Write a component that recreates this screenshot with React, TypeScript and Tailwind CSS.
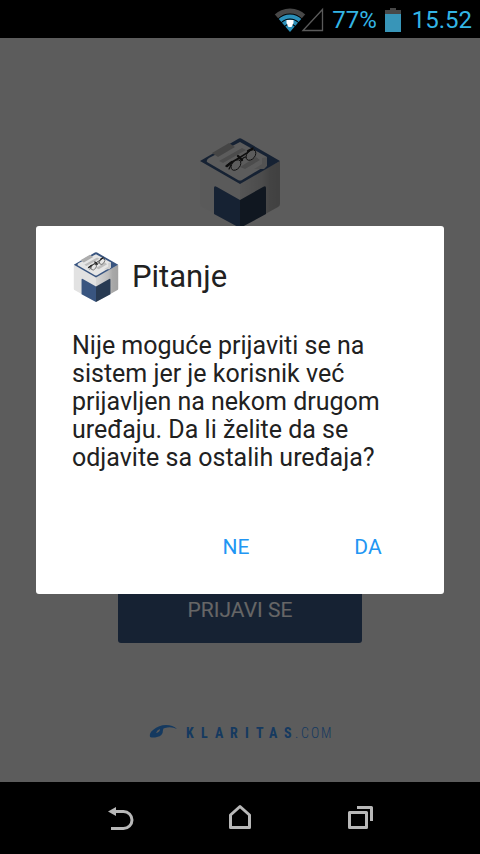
import React from 'react';

interface IconProps {
  className?: string;
}

/**
 * Cube logo with a sheet of paper and glasses on its top face
 */
const CubeLogo: React.FC<IconProps> = ({ className = '' }) => (
  <svg viewBox="0 0 80 90" className={className} aria-hidden="true">
    <defs>
      <linearGradient id="cubeRight" x1="0" x2="1" y1="0" y2="0">
        <stop offset="0" stopColor="#d6d6d6" />
        <stop offset="0.55" stopColor="#bdbdbd" />
        <stop offset="0.75" stopColor="#a8a8a8" />
        <stop offset="1" stopColor="#a2a2a2" />
      </linearGradient>
    </defs>
    <path d="M0 23 L40 45 V90 L2 69 Q0 68 0 66 Z" fill="#e2e2e2" />
    <path d="M40 45 L80 23 V66 Q80 68 78 69 L40 90 Z" fill="url(#cubeRight)" />
    <path d="M14 50 Q14 47 17 49 L40 62 V90 L14 76 Z" fill="#395580" />
    <path d="M40 62 L63 49 Q66 47 66 50 V76 L40 90 Z" fill="#283a52" />
    <path d="M38 1 Q40 -0.5 42 1 L80 23 L40 46 L0 23 Z" fill="#395580" />
    <path d="M40 4 L67 19 V27 L42 42 Q40 43 38 42 L7 24 Q6 22 9 20 Z" fill="#e6e6e6" />
    <path d="M67 19 V28 L64 31 H54 L62 26 L62 20 Z" fill="#cfcfcf" />
    <path d="M12 15 L29 5 L35 9 L18 19 Z" fill="#adadad" />
    <path d="M19 23 L42 10 L46 12 L23 25 Z M40 29 L56 19 L60 22 L45 31 Z" fill="#bdbdbd" />
    <g fill="none" stroke="#222" strokeLinecap="round">
      <ellipse cx="36" cy="27" rx="6" ry="4" transform="rotate(-50 36 27)" strokeWidth="0.900" />
      <ellipse cx="51" cy="17" rx="6" ry="4" transform="rotate(-50 51 17)" strokeWidth="0.900" />
      <path d="M41 23 Q43 19 46 19 M29 31 L31 27" strokeWidth="1.200" />
      <path d="M26 28 L32 24 L39 20 L47 15 L53 10" strokeWidth="1.500" />
      <path d="M27 28 L32 24 M38 18 L42 22 M48 13 L52 11" strokeWidth="2.400" />
    </g>
  </svg>
);

const StatusBar: React.FC = () => (
  <header className="flex h-[38px] shrink-0 items-center justify-end bg-black pt-px pr-2 text-2xl text-[#33b5e5]">
    <svg viewBox="0 0 50 26" className="mr-2 h-[26px] w-[50px]" aria-hidden="true">
      <defs>
        <clipPath id="wifiWedge">
          <path d="M16 25 L-3 3 V0 H35 V3 Z" />
        </clipPath>
      </defs>
      <g clipPath="url(#wifiWedge)">
        <circle cx="16" cy="24" r="20" fill="none" stroke="#484848" strokeWidth="5" />
        <circle cx="16" cy="24" r="14.500" fill="none" stroke="#2b8fb8" strokeWidth="4" />
        <circle cx="16" cy="24" r="9.500" fill="none" stroke="#2b8fb8" strokeWidth="4" />
        <circle cx="16" cy="24" r="6.500" fill="#2b8fb8" />
      </g>
      <path d="M12.500 13 H19.500 V16 L17.500 20 H14.500 L12.500 16 Z" fill="#fff" />
      <path d="M29 23.500 L48.500 2.500 V23.500 Z" fill="none" stroke="#5a5a5a" strokeWidth="1.300" />
    </svg>
    <span>77%</span>
    <svg viewBox="0 0 16 24" className="mr-[11px] ml-2 h-6 w-4" aria-hidden="true">
      <path d="M5 0 H11 V2 H16 V7 H0 V2 H5 Z" fill="#484848" />
      <path d="M0 6 H16 V24 H0 Z" fill="#3895b8" />
    </svg>
    <time>15.52</time>
  </header>
);

const KlaritasLogo: React.FC<IconProps> = ({ className = '' }) => (
  <svg viewBox="0 0 184 18" className={className} role="img" aria-label="KLARITAS.COM">
    <path
      d="M2 14 Q1 10 5 7 Q11 2 18 2 Q25 2 29 6 Q23 3 17 5 Q15 5 15 7 Q15 13 9 14 Q5 15 2 14 Z"
      fill="#3590ee"
    />
    <path d="M8 10 Q9 7 12 6 Q12 9 8 10 Z" fill="#e5e5e5" />
    <text
      x="38 53 67 82 97 108 121 136"
      y="15"
      fill="#3590ee"
      className="font-['Roboto_Condensed','Liberation_Sans_Narrow',Roboto,sans-serif] text-[14px] font-bold"
    >
      KLARITAS
    </text>
    <text
      x="147 153 163 173"
      y="15"
      fill="#3590ee"
      className="font-['Roboto_Condensed','Liberation_Sans_Narrow',Roboto,sans-serif] text-[14px] font-light"
    >
      .COM
    </text>
  </svg>
);

const LoginScreen: React.FC = () => (
  <div className="flex grow flex-col items-center bg-[#e5e5e5] pt-[100px] pb-[41px]">
    <CubeLogo className="h-[90px] w-20" />
    <button
      type="button"
      className="mt-auto h-16 w-[244px] rounded-[3px] bg-[#395580] text-[21px] text-white"
    >
      PRIJAVI SE
    </button>
    <KlaritasLogo className="mt-20 h-[18px] w-[184px]" />
  </div>
);

const QuestionDialog: React.FC = () => (
  <div className="absolute inset-0 flex items-center justify-center bg-black/60 px-9">
    <div
      role="alertdialog"
      aria-labelledby="dialog-title"
      aria-describedby="dialog-message"
      className="flex w-full flex-col rounded-[3px] bg-white px-9 pt-6 pb-5 text-[#212121]"
    >
      <div className="flex h-[54px] items-center gap-3">
        <CubeLogo className="h-[50px] w-12" />
        <h1 id="dialog-title" className="text-[31px] leading-9">Pitanje</h1>
      </div>
      <p id="dialog-message" className="mt-7 text-[25px] leading-7">
        Nije moguće prijaviti se na sistem jer je korisnik već prijavljen na nekom drugom uređaju. Da li želite da se
        odjavite sa ostalih uređaja?
      </p>
      <div className="mt-[50px] -mr-5 flex justify-end gap-3 text-[21px] text-[#2196f3]">
        <button type="button" className="h-[52px] w-[120px]">NE</button>
        <button type="button" className="h-[52px] w-[120px]">DA</button>
      </div>
    </div>
  </div>
);

const NavigationBar: React.FC = () => (
  <nav className="flex h-[72px] shrink-0 items-center justify-center gap-20 bg-black text-[#b8b8b8]">
    <button type="button" aria-label="Back">
      <svg viewBox="0 0 40 40" className="size-10" fill="none" stroke="currentColor" strokeWidth="3">
        <path d="M14 13.500 H23.500 A8.500 8.500 0 0 1 23.500 30.500 H11" />
        <path d="M8 13.500 L16 9 V18 Z" fill="currentColor" stroke="none" />
      </svg>
    </button>
    <button type="button" aria-label="Home">
      <svg viewBox="0 0 40 40" className="size-10" fill="none" stroke="currentColor" strokeWidth="3">
        <path d="M10.500 29.500 V17 L20 8.500 L29.500 17 V29.500 Z" strokeLinejoin="round" />
      </svg>
    </button>
    <button type="button" aria-label="Recent apps">
      <svg viewBox="0 0 40 40" className="size-10" fill="none" stroke="currentColor" strokeWidth="3">
        <path d="M9.500 14.500 H26.500 V29.500 H9.500 Z" strokeLinejoin="round" />
        <path d="M17 9.500 H31.500 V23" strokeLinejoin="round" />
      </svg>
    </button>
  </nav>
);

export default function App() {
  return (
    <div className="flex min-h-screen flex-col font-[Roboto,sans-serif]">
      <StatusBar />
      <main className="relative flex grow flex-col">
        <LoginScreen />
        <QuestionDialog />
      </main>
      <NavigationBar />
    </div>
  );
}
